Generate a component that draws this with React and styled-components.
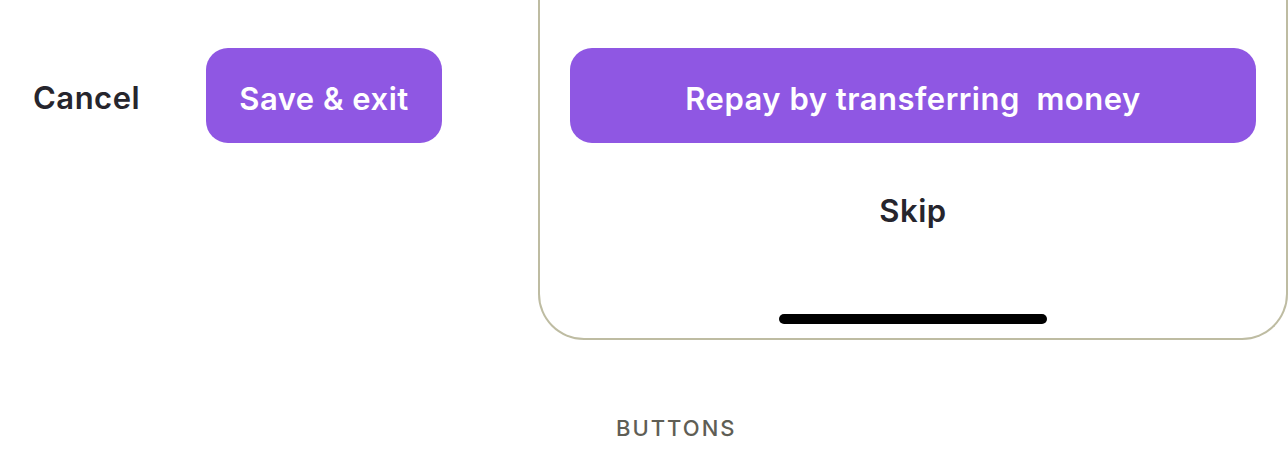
import React from 'react'
import styled, { createGlobalStyle } from 'styled-components'

const GlobalStyle = createGlobalStyle`
  html, body {
    margin: 0;
    padding: 0;
    background: #ffffff;
  }
  body {
    font-family: Inter, "Liberation Sans", sans-serif;
    -webkit-font-smoothing: antialiased;
  }
`

const Canvas = styled.div`
  width: 1288px;
  height: 464px;
  display: flex;
  flex-direction: column;
  overflow: hidden;
`

const Stage = styled.div`
  display: flex;
  align-items: flex-start;
  height: 340px;
`

const HeaderActions = styled.div`
  display: flex;
  align-items: center;
  padding: 48px 0 0 33px;
`

const TextButton = styled.button`
  border: none;
  background: none;
  padding: 4px 0 0;
  margin: 0;
  font-family: inherit;
  font-size: 31px;
  font-weight: 600;
  color: #26252d;
  text-align: ${p => (p.$align || 'center')};
  width: ${p => (p.$width ? `${p.$width}px` : 'auto')};
  letter-spacing: 0.5px;
  cursor: pointer;
`

const PrimaryButton = styled.button`
  border: none;
  margin: 0;
  padding: 5px 0 0;
  height: 95px;
  width: ${p => (p.$block ? '100%' : `${p.$width}px`)};
  border-radius: 22px;
  background: #8f57e3;
  color: #ffffff;
  font-family: inherit;
  font-size: 31px;
  font-weight: 600;
  letter-spacing: 0.5px;
  white-space: pre;
  cursor: pointer;
`

const PhoneSheet = styled.div`
  margin-left: auto;
  width: 750px;
  height: 340px;
  box-sizing: border-box;
  border: 2px solid #bebca2;
  border-top: none;
  border-radius: 0 0 46px 46px;
  padding: 48px 30px 0 30px;
  display: flex;
  flex-direction: column;
  align-items: center;
`

const SkipRow = styled.div`
  height: 131px;
  display: flex;
  align-items: center;
  justify-content: center;
`

const HomeIndicator = styled.div`
  margin-top: 40px;
  width: 268px;
  height: 10px;
  border-radius: 5px;
  background: #000000;
`

const Caption = styled.div`
  padding: 75px 0 0 616px;
  font-size: 22px;
  font-weight: 500;
  letter-spacing: 2px;
  color: #5f5e55;
  text-transform: uppercase;
`

export default function App() {
  return (
    <>
      <GlobalStyle />
      <Canvas>
        <Stage>
          <HeaderActions>
            <TextButton $width={173} $align="left">Cancel</TextButton>
            <PrimaryButton $width={236}>Save &amp; exit</PrimaryButton>
          </HeaderActions>
          <PhoneSheet>
            <PrimaryButton $block>{'Repay by transferring  money'}</PrimaryButton>
            <SkipRow>
              <TextButton>Skip</TextButton>
            </SkipRow>
            <HomeIndicator />
          </PhoneSheet>
        </Stage>
        <Caption>Buttons</Caption>
      </Canvas>
    </>
  )
}
